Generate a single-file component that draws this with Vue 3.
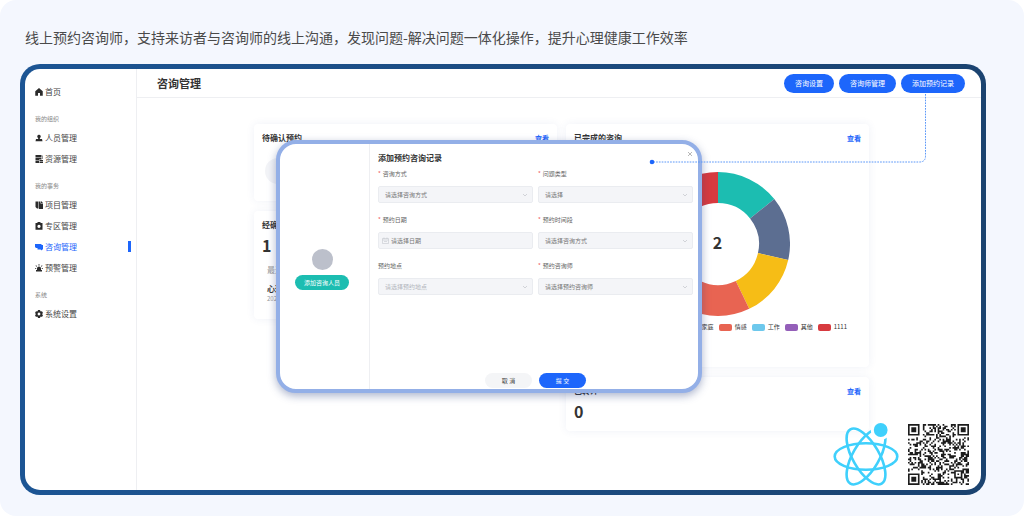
<script setup>
const icons = {
  home: 'M8 0 15.500 6.500V15.500H.5V6.500zM6 15.500h4V10H6z',
  user: 'M8 1.500a3.500 3.500 0 0 1 2 6.400L9.500 10H14l1 4.500H1L2 10h4.500L6 7.900a3.500 3.500 0 0 1 2-6.400z',
  resource: 'M1 0h12v5H1zM1 6h12v3H8v2H1zM1 12h7v4H1zM9 10h7v2H9zM9 13h7v3H9zM14 1h1v7h-1z',
  project: 'M1 1h6v14H4L1 12zM8 1h3v4h5v11H8zM12 0l4 4h-4z',
  zone: 'M5 0h6v2h4v13.500H1V2h4zM8 5.500a3.200 3.200 0 1 0 .01 0z',
  chat: 'M0 2h13v2h3v9h-2v2l-3-2H5v-3H2v-1H0z',
  alarm: 'M4 12V9a4 4 0 0 1 8 0v3h2v3H2V12zM7.200 0h1.600v3.500H7.200zM1 3.500l1.200-1.200 2 2L3 5.500zM15 3.500l-1.200-1.200-2 2L13 5.500zM0 8h2.500v1.500H0zM13.500 8H16v1.500h-2.500z',
  gear: 'M6 0h4l.6 2.200 1.300.7L14 2.300l2 3.500L14.500 7.400v1.400L16 10.300l-2 3.500-2.200-.6-1.200.7L10 16H6l-.6-2.100-1.300-.7-2.100.6-2-3.500 1.500-1.500V7.400L0 5.800l2-3.500 2.200.6 1.200-.7zM8 5.200a2.800 2.800 0 1 0 .01 0z',
}

const menu = [
  { title: '', items: [{ text: '首页', icon: 'home' }] },
  { title: '我的组织', items: [{ text: '人员管理', icon: 'user' }, { text: '资源管理', icon: 'resource' }] },
  {
    title: '我的事务',
    items: [
      { text: '项目管理', icon: 'project' },
      { text: '专区管理', icon: 'zone' },
      { text: '咨询管理', icon: 'chat', active: true },
      { text: '预警管理', icon: 'alarm' },
    ],
  },
  { title: '系统', items: [{ text: '系统设置', icon: 'gear' }] },
]

const actions = ['咨询设置', '咨询师管理', '添加预约记录']

const topics = [
  { name: '人际', color: '#1cbdb1' },
  { name: '学业', color: '#5c6e91' },
  { name: '家庭', color: '#f6bd16' },
  { name: '情感', color: '#e86452' },
  { name: '工作', color: '#6dc8ec' },
  { name: '其他', color: '#945fb9' },
  { name: '1111', color: '#d73a3f' },
]

function slicePath(i) {
  const step = (Math.PI * 2) / topics.length
  const a = i * step
  const b = a + step
  const pt = (r, t) => `${(72 + r * Math.sin(t)).toFixed(2)} ${(72 - r * Math.cos(t)).toFixed(2)}`
  return `M${pt(72, a)}A72 72 0 0 1 ${pt(72, b)}L${pt(41, b)}A41 41 0 0 0 ${pt(41, a)}Z`
}

const fields = [
  { id: 'way', label: '咨询方式', hint: '请选择咨询方式', required: true },
  { id: 'kind', label: '问题类型', hint: '请选择', required: true },
  { id: 'date', label: '预约日期', hint: '请选择日期', required: true, date: true },
  { id: 'slot', label: '预约时间段', hint: '请选择咨询方式', required: true },
  { id: 'place', label: '预约地点', hint: '请选择预约地点', muted: true },
  { id: 'counselor', label: '预约咨询师', hint: '请选择预约咨询师', required: true },
]

const SIZE = 37
function codePath() {
  let seed = 20231
  let d = ''
  const random = () => {
    seed = (seed + 0x6d2b79f5) | 0
    let t = Math.imul(seed ^ (seed >>> 15), 1 | seed)
    t = (t + Math.imul(t ^ (t >>> 7), 61 | t)) ^ t
    return ((t ^ (t >>> 14)) >>> 0) / 4294967296
  }
  const ring = (x, y, cx, cy) => Math.max(Math.abs(x - cx), Math.abs(y - cy))
  for (let y = 0; y < SIZE; y++) {
    for (let x = 0; x < SIZE; x++) {
      let on = random() < 0.42
      for (const [cx, cy] of [[3, 3], [33, 3], [3, 33]]) {
        const r = ring(x, y, cx, cy)
        if (r <= 4) on = r < 2 || r === 3
      }
      const r = ring(x, y, 30, 30)
      if (r <= 2) on = r !== 1
      if (on) d += `M${x} ${y}h1v1h-1z`
    }
  }
  return d
}
const code = codePath()
</script>

<template>
  <div class="page">
    <p class="intro">线上预约咨询师，支持来访者与咨询师的线上沟通，发现问题-解决问题一体化操作，提升心理健康工作效率</p>

    <div class="frame">
      <div class="screen">
        <nav class="sidebar">
          <section v-for="(group, g) in menu" :key="g">
            <h2 v-if="group.title" class="group-title">{{ group.title }}</h2>
            <a v-for="item in group.items" :key="item.text" href="#" class="item" :class="{ active: item.active }">
              <svg class="item-icon" viewBox="0 0 16 16"><path :d="icons[item.icon]" fill-rule="evenodd" /></svg>
              <span>{{ item.text }}</span>
            </a>
          </section>
        </nav>

        <main class="main">
          <header class="topbar">
            <h1>咨询管理</h1>
            <div class="actions">
              <button v-for="a in actions" :key="a" type="button" class="pill">{{ a }}</button>
            </div>
          </header>

          <div class="board">
            <div class="column">
              <section class="card waiting">
                <div class="card-head"><h3>待确认预约</h3><a href="#">查看</a></div>
                <div class="face"></div>
              </section>
              <section class="card confirmed">
                <div class="card-head"><h3>经确认预约</h3></div>
                <div class="number">1</div>
                <div class="recent">
                  <span class="recent-label">最近</span>
                  <strong>心理咨询</strong>
                  <span class="recent-date">2023</span>
                </div>
              </section>
            </div>

            <div class="column">
              <section class="card finished">
                <div class="card-head"><h3>已完成的咨询</h3><a href="#">查看</a></div>
                <div class="donut">
                  <svg viewBox="0 0 144 144">
                    <path v-for="(t, i) in topics" :key="t.name" :d="slicePath(i)" :fill="t.color" />
                  </svg>
                  <span class="total">2</span>
                </div>
                <ul class="legend">
                  <li v-for="t in topics" :key="t.name"><i :style="{ background: t.color }"></i>{{ t.name }}</li>
                </ul>
              </section>
              <section class="card referred">
                <div class="card-head"><h3>已转介</h3><a href="#">查看</a></div>
                <div class="number">0</div>
              </section>
            </div>
          </div>
        </main>

        <div class="dialog" role="dialog" aria-labelledby="dialog-title">
          <div class="person">
            <div class="avatar"></div>
            <button type="button" class="add">添加咨询人员</button>
          </div>
          <form class="form" @submit.prevent>
            <button type="button" class="close" aria-label="关闭">
              <svg viewBox="0 0 6 6"><path d="M1 1l4 4M5 1L1 5" /></svg>
            </button>
            <h2 id="dialog-title">添加预约咨询记录</h2>
            <div class="fields">
              <div v-for="f in fields" :key="f.id" class="field">
                <label :for="f.id"><b v-if="f.required">*</b>{{ f.label }}</label>
                <div class="control" :class="{ muted: f.muted, dated: f.date }">
                  <template v-if="f.date">
                    <svg class="calendar" viewBox="0 0 7 7"><path d="M.5 1.500h6v5h-6zM.5 3h6M2 .5v1.500M5 .5v1.500M2 4.500h3" /></svg>
                    <input :id="f.id" type="text" :placeholder="f.hint" />
                  </template>
                  <template v-else>
                    <select :id="f.id"><option>{{ f.hint }}</option></select>
                    <svg class="chevron" viewBox="0 0 6 4"><path d="M1 1l2 2 2-2" /></svg>
                  </template>
                </div>
              </div>
            </div>
            <div class="footer">
              <button type="button" class="cancel">取 消</button>
              <button type="submit" class="submit">提 交</button>
            </div>
          </form>
        </div>

        <svg class="connector" viewBox="0 0 279 72">
          <path d="M276.500 0V62q0 6-6 6H3" />
          <circle cx="3" cy="68" r="2.300" />
        </svg>

        <div class="marks">
          <svg class="atom" viewBox="0 0 68 66">
            <g fill="none" stroke="#3fd0fc" stroke-width="2.600">
              <ellipse cx="34" cy="35.500" rx="31.300" ry="13.200" />
              <ellipse cx="34" cy="35.500" rx="31.300" ry="13.200" transform="rotate(60 34 35.500)" />
              <ellipse cx="34" cy="35.500" rx="31.300" ry="13.200" transform="rotate(120 34 35.500)" />
            </g>
            <circle cx="48.700" cy="9" r="10" fill="#fff" />
            <circle cx="48.700" cy="9" r="6.900" fill="#3fd0fc" />
          </svg>
          <svg class="code" viewBox="0 0 37 37"><path :d="code" fill="#1c1c1c" /></svg>
        </div>
      </div>
    </div>
  </div>
</template>

<style>
body {
  margin: 0;
  background: #fff;
}
</style>

<style scoped>
* {
  box-sizing: border-box;
}
.page {
  display: flex;
  flex-direction: column;
  min-height: 100vh;
  padding: 27px 38px 21px 20px;
  border-radius: 16px;
  background: #f4f7fe;
  color: #333;
  font-family: "Noto Sans CJK SC", sans-serif;
}
h1, h2, h3, p, ul {
  margin: 0;
  padding: 0;
}
button, input, select {
  margin: 0;
  border: 0;
  font-family: inherit;
}
a {
  text-decoration: none;
}
.intro {
  margin: 0 0 17px 5px;
  color: #4a4a4a;
  font-size: 14px;
  line-height: 20px;
}
.frame {
  display: flex;
  flex: 1;
  padding: 5px;
  border-radius: 20px;
  background: linear-gradient(90deg, #1c5594, #1b4370);
}
.screen {
  position: relative;
  display: flex;
  flex: 1;
  overflow: hidden;
  border-radius: 15px;
  background: #fff;
}
.sidebar {
  width: 112px;
  padding-top: 12px;
  border-right: 1px solid #eeeff2;
}
.group-title {
  padding: 13px 0 4px 10px;
  color: #888;
  font-size: 6px;
  font-weight: 400;
  line-height: 8px;
}
.item {
  display: flex;
  align-items: center;
  gap: 2px;
  height: 21px;
  padding: 0 5px 0 10px;
  color: #444;
  font-size: 8px;
}
.item-icon {
  width: 8px;
  height: 8px;
  fill: #2b2b2b;
}
.item.active {
  color: #1d66fb;
}
.item.active .item-icon {
  fill: #1d66fb;
}
.item.active::after {
  content: "";
  width: 3px;
  height: 11px;
  margin-left: auto;
  background: #1d66fb;
}
.main {
  flex: 1;
}
.topbar {
  display: flex;
  align-items: center;
  justify-content: space-between;
  height: 29px;
  padding: 0 16px 0 20px;
  border-bottom: 1px solid #eeeff2;
}
.topbar h1 {
  font-size: 11px;
  font-weight: 700;
}
.actions {
  display: flex;
  gap: 5px;
}
.pill {
  height: 19px;
  padding: 0 11px;
  border-radius: 10px;
  background: #1d66fb;
  color: #fff;
  font-size: 7px;
  line-height: 19px;
}
.board {
  display: grid;
  grid-template-columns: 1fr 1fr;
  gap: 9px;
  padding: 26px 112px 0 117px;
}
.column {
  display: flex;
  flex-direction: column;
  gap: 10px;
}
.card {
  padding: 8px;
  border-radius: 4px;
  background: #fff;
  box-shadow: 0 0 8px rgba(50, 80, 150, 0.08);
}
.card-head {
  display: flex;
  align-items: center;
  justify-content: space-between;
  height: 12px;
}
.card-head h3 {
  font-size: 8px;
  font-weight: 700;
  line-height: 12px;
}
.card-head a {
  color: #1d66fb;
  font-size: 7px;
  font-weight: 700;
}
.face {
  width: 26px;
  height: 26px;
  margin: 14px 0 9px 3px;
  border-radius: 50%;
  background: #f3f4f7;
}
.number {
  margin: 6px 0 4px;
  font-size: 16px;
  font-weight: 700;
  line-height: 16px;
}
.recent {
  display: flex;
  flex-direction: column;
  padding: 8px 0 7px 5px;
  font-size: 8px;
  line-height: 10px;
}
.recent-label {
  margin-bottom: 9px;
  color: #999;
}
.recent strong {
  font-weight: 700;
}
.recent-date {
  color: #999;
  font-size: 6px;
}
.finished {
  padding-bottom: 36px;
}
.donut {
  display: grid;
  place-items: center;
  margin-top: 28px;
}
.donut svg,
.total {
  grid-area: 1 / 1;
}
.donut svg {
  width: 144px;
  height: 144px;
}
.total {
  padding-bottom: 4px;
  font-size: 16px;
  font-weight: 700;
  line-height: 16px;
}
.legend {
  display: flex;
  justify-content: flex-end;
  gap: 5px;
  margin-top: 7px;
  padding-right: 14px;
  font-size: 6px;
  line-height: 8px;
  list-style: none;
}
.legend li {
  display: flex;
  align-items: center;
  gap: 3px;
}
.legend i {
  width: 13px;
  height: 7px;
  border-radius: 2px;
}
.dialog {
  position: absolute;
  top: 71px;
  left: 251px;
  right: 279px;
  display: flex;
  border: 4px solid #93afe7;
  border-radius: 20px;
  background: #fff;
  box-shadow: 0 3px 8px rgba(50, 70, 130, 0.4);
}
.person {
  display: flex;
  flex-direction: column;
  align-items: center;
  justify-content: center;
  gap: 5px;
  width: 90px;
  padding: 6px 5px 0 0;
  border-right: 1px solid #eeeff2;
}
.avatar {
  width: 21px;
  height: 21px;
  border-radius: 50%;
  background: #bcc0cb;
}
.add {
  height: 15px;
  padding: 0 9px;
  border-radius: 8px;
  background: #1cbdb1;
  color: #fff;
  font-size: 6px;
  line-height: 15px;
}
.form {
  position: relative;
  flex: 1;
  padding: 8px 5px 1px 8px;
}
.close {
  position: absolute;
  top: 6px;
  right: 4px;
  display: flex;
  padding: 1px;
  background: none;
}
.close svg {
  width: 6px;
  height: 6px;
  fill: none;
  stroke: #999;
  stroke-width: 0.7;
}
.form h2 {
  margin-bottom: 6px;
  font-size: 8px;
  font-weight: 700;
  line-height: 12px;
}
.fields {
  display: grid;
  grid-template-columns: 1fr 1fr;
  gap: 13px 5px;
}
.field label {
  display: block;
  margin-bottom: 8px;
  color: #666;
  font-size: 6px;
  line-height: 8px;
}
.field b {
  margin-right: 2px;
  color: #f05656;
  font-weight: 400;
}
.control {
  position: relative;
  display: flex;
  align-items: center;
  height: 17px;
  border: 1px solid #eaecf0;
  border-radius: 2px;
  background: #f4f5f8;
}
.control select,
.control input {
  width: 100%;
  height: 15px;
  padding: 0 6px;
  appearance: none;
  background: none;
  color: #777;
  font-size: 6px;
}
.control input::placeholder {
  color: #777;
}
.control.dated {
  padding-left: 3px;
}
.control.dated input {
  padding: 0 2px;
}
.control.muted select {
  color: #b3b6bd;
}
.calendar {
  flex: none;
  width: 7px;
  height: 7px;
  fill: none;
  stroke: #c4c7ce;
  stroke-width: 0.6;
}
.chevron {
  position: absolute;
  right: 4px;
  width: 6px;
  height: 4px;
  fill: none;
  stroke: #b9bcc3;
  stroke-width: 0.6;
  pointer-events: none;
}
.footer {
  display: flex;
  justify-content: center;
  gap: 7px;
  margin-top: 78px;
}
.footer button {
  width: 47px;
  height: 15px;
  padding: 0;
  border-radius: 8px;
  font-size: 6px;
  line-height: 15px;
}
.cancel {
  background: #f4f5f7;
  color: #444;
}
.submit {
  background: #1d66fb;
  color: #fff;
}
.connector {
  position: absolute;
  top: 25px;
  right: 53px;
  width: 279px;
  height: 72px;
  pointer-events: none;
}
.connector path {
  fill: none;
  stroke: #5c98f8;
  stroke-dasharray: 1.700 1.100;
}
.connector circle {
  fill: #1d66fb;
}
.marks {
  position: absolute;
  right: 12px;
  bottom: 3px;
  display: flex;
  align-items: center;
  gap: 8px;
}
.atom {
  width: 68px;
  height: 66px;
}
.code {
  width: 61px;
  height: 61px;
}
</style>
